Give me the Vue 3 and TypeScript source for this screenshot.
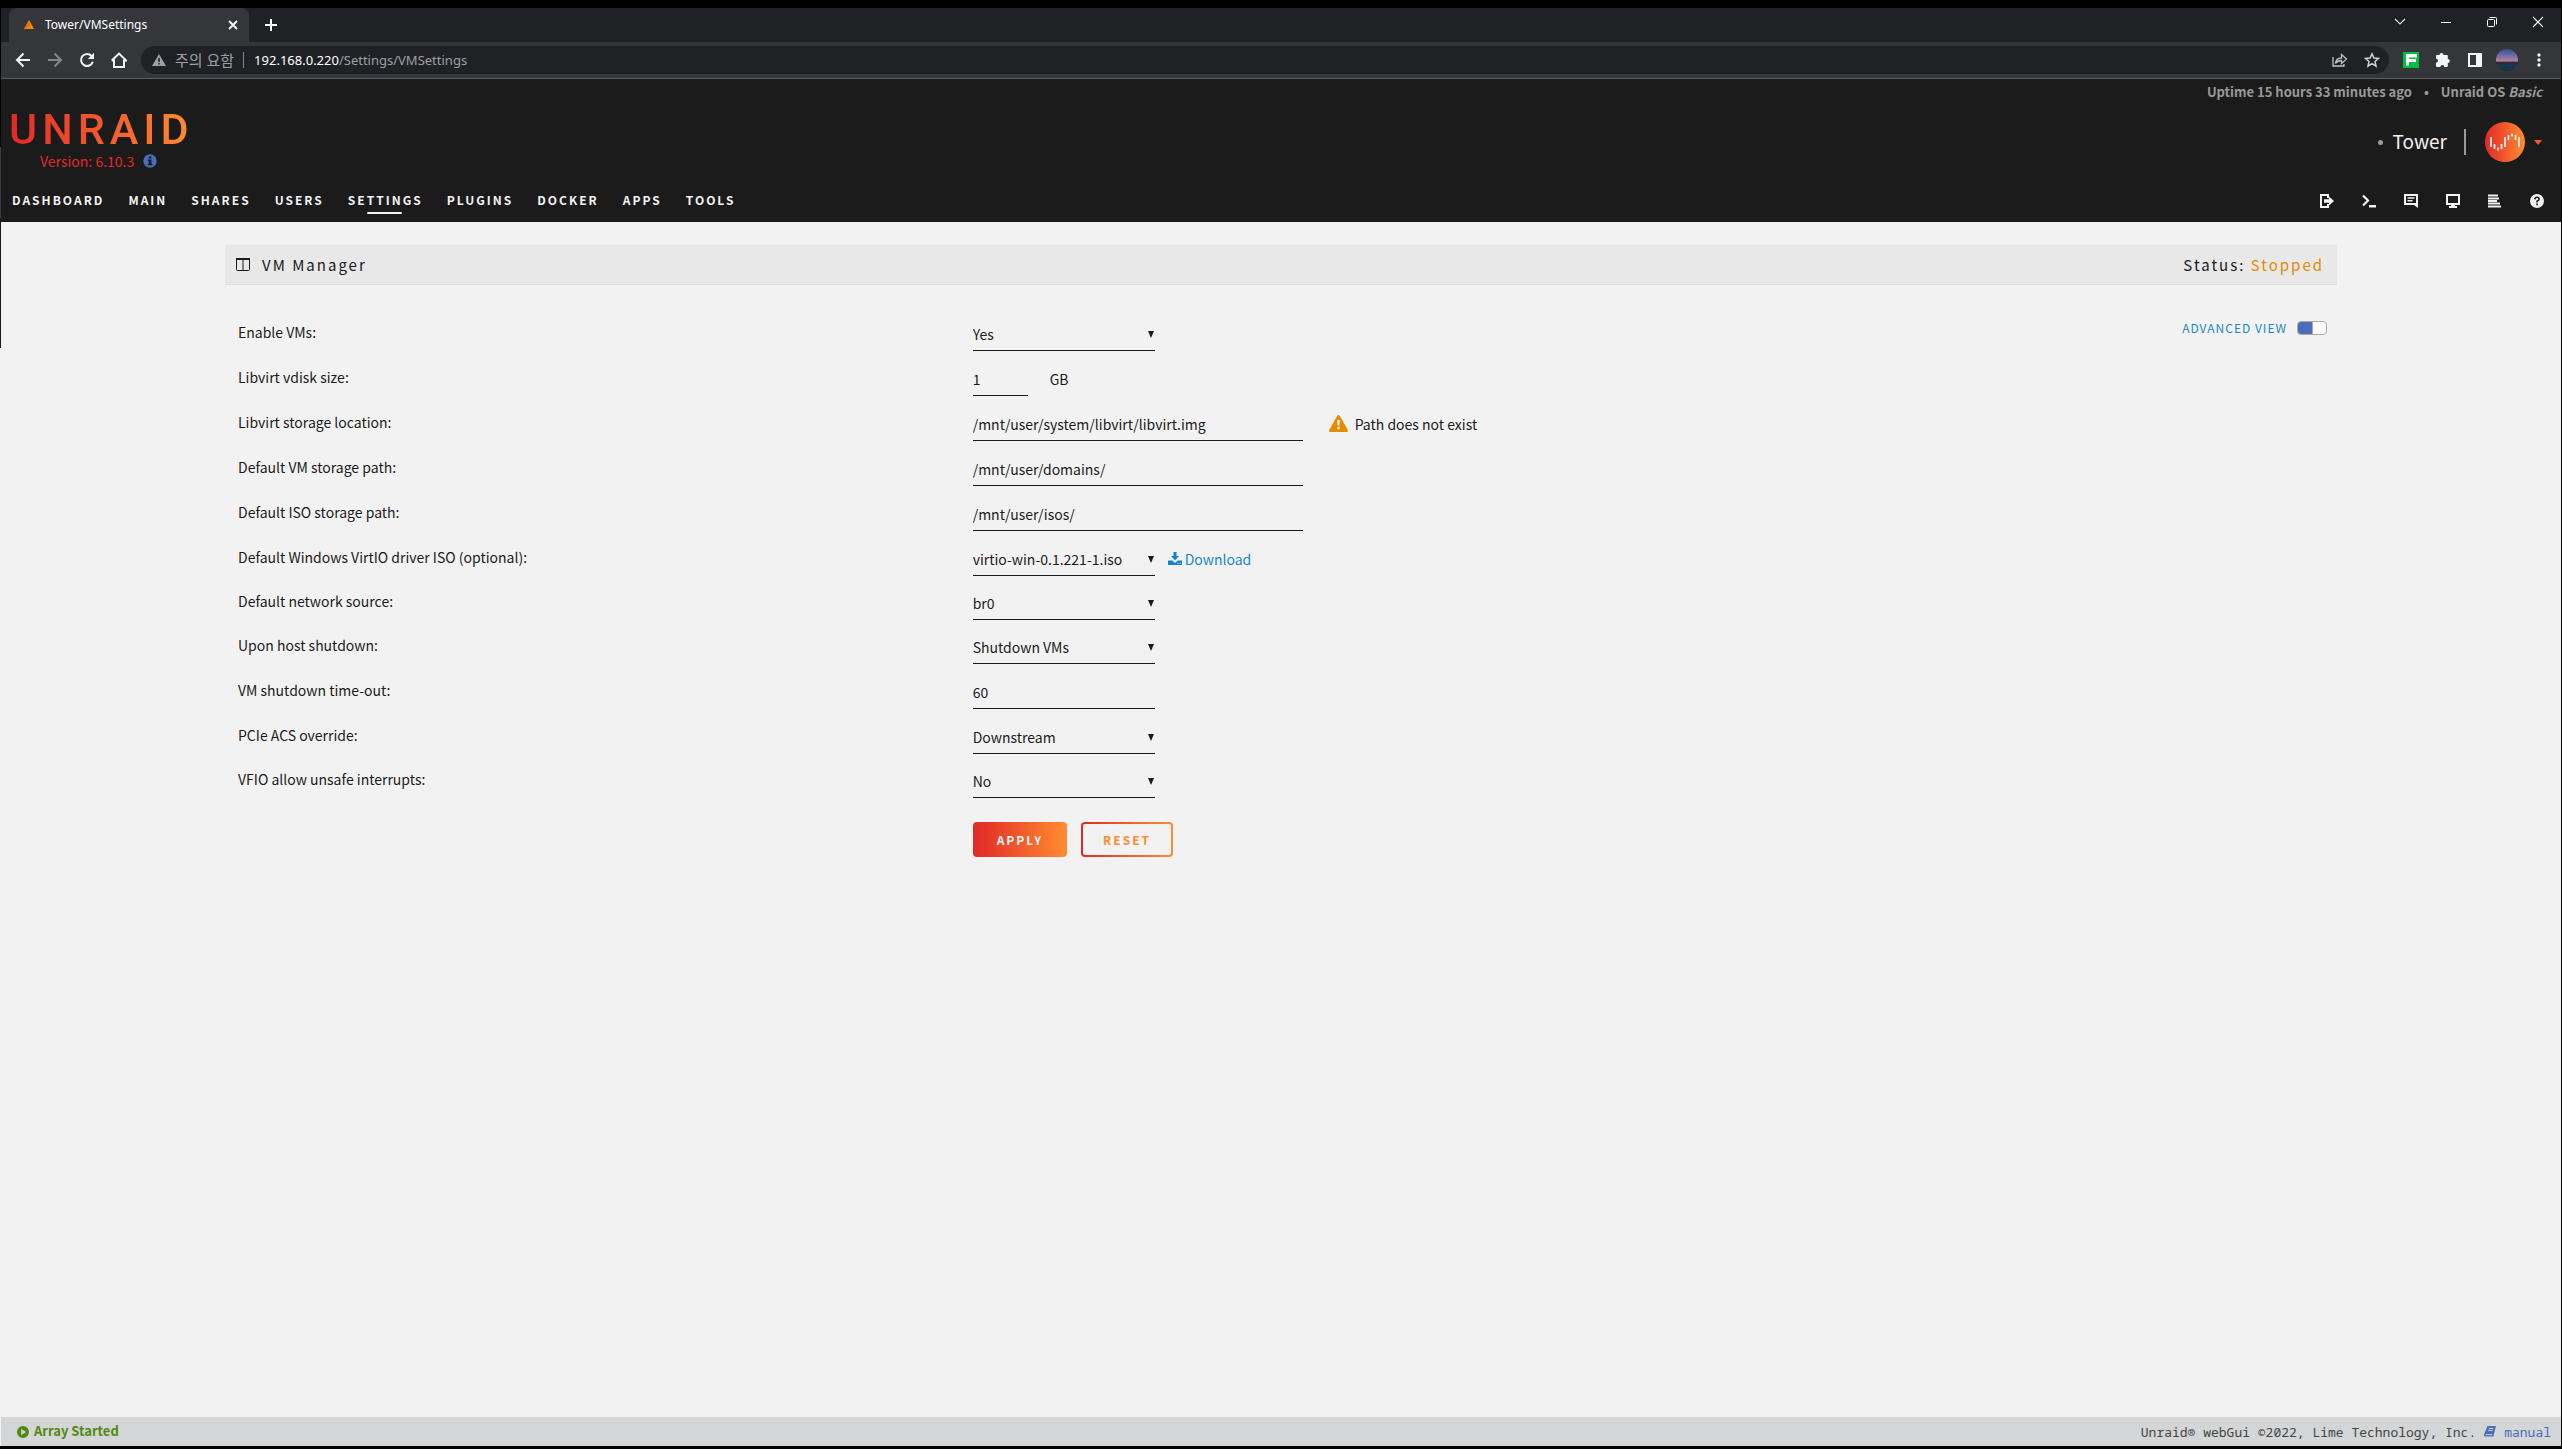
<script setup lang="ts">
import { ref } from 'vue'

interface Field {
  id: string
  label: string
  kind: 'select' | 'text'
  value: string
  size?: 'small' | 'wide'
  compact?: boolean
}

const tabs = ['Dashboard', 'Main', 'Shares', 'Users', 'Settings', 'Plugins', 'Docker', 'Apps', 'Tools']
const activeTab = 'Settings'
const advanced = ref(true)

const fields = ref<Field[]>([
  { id: 'service', label: 'Enable VMs:', kind: 'select', value: 'Yes' },
  { id: 'image-size', label: 'Libvirt vdisk size:', kind: 'text', value: '1', size: 'small' },
  { id: 'image-file', label: 'Libvirt storage location:', kind: 'text', value: '/mnt/user/system/libvirt/libvirt.img', size: 'wide' },
  { id: 'domain-dir', label: 'Default VM storage path:', kind: 'text', value: '/mnt/user/domains/', size: 'wide' },
  { id: 'media-dir', label: 'Default ISO storage path:', kind: 'text', value: '/mnt/user/isos/', size: 'wide' },
  { id: 'virtio', label: 'Default Windows VirtIO driver ISO (optional):', kind: 'select', value: 'virtio-win-0.1.221-1.iso' },
  { id: 'network', label: 'Default network source:', kind: 'select', value: 'br0', compact: true },
  { id: 'host-shutdown', label: 'Upon host shutdown:', kind: 'select', value: 'Shutdown VMs', compact: true },
  { id: 'timeout', label: 'VM shutdown time-out:', kind: 'text', value: '60' },
  { id: 'pcie', label: 'PCIe ACS override:', kind: 'select', value: 'Downstream' },
  { id: 'vfio', label: 'VFIO allow unsafe interrupts:', kind: 'select', value: 'No', compact: true },
])
</script>

<template>
  <div class="screen">
    <div class="tabstrip">
      <div class="tab">
        <svg class="favicon" width="10" height="10" viewBox="0 0 10 10"><path d="M5 0 10 9H0z" fill="#ff8c00" /><path d="M5 0 6 6 0 9z" fill="#e86a10" /></svg>
        <span class="tab-title">Tower/VMSettings</span>
        <button class="plain" aria-label="Close tab">
          <svg width="10" height="10" viewBox="0 0 10 10"><path d="M1 1l8 8M9 1l-8 8" stroke="#f1f3f4" stroke-width="2" /></svg>
        </button>
      </div>
      <button class="plain new-tab" aria-label="New tab">
        <svg width="12" height="12" viewBox="0 0 12 12"><path d="M6 0v12M0 6h12" stroke="#fff" stroke-width="2" /></svg>
      </button>
      <div class="window-controls">
        <button class="plain" aria-label="Search tabs"><svg width="12" height="12" viewBox="0 0 12 12"><path d="M1 3l5 5 5-5" fill="none" stroke="#e8eaed" stroke-width="1.1" /></svg></button>
        <button class="plain" aria-label="Minimize"><svg width="12" height="12" viewBox="0 0 12 12"><path d="M1 6.5h10" stroke="#fff" /></svg></button>
        <button class="plain" aria-label="Restore"><svg width="12" height="12" viewBox="0 0 12 12"><rect x="1.500" y="3.500" width="7" height="7" rx="1" fill="none" stroke="#fff" /><path d="M3.500 1.500h6q1 0 1 1v6" fill="none" stroke="#fff" /></svg></button>
        <button class="plain" aria-label="Close"><svg width="12" height="12" viewBox="0 0 12 12"><path d="M1 1l10 10M11 1 1 11" stroke="#fff" stroke-width="1.200" /></svg></button>
      </div>
    </div>

    <div class="toolbar">
      <div class="nav-buttons">
        <button class="plain" aria-label="Back"><svg width="16" height="16" viewBox="0 0 16 16"><path d="M15 8H2M8.500 1.500 2 8l6.500 6.500" fill="none" stroke="#f1f3f4" stroke-width="2" /></svg></button>
        <button class="plain" aria-label="Forward"><svg width="16" height="16" viewBox="0 0 16 16"><path d="M1 8h13M7.500 1.500 14 8l-6.500 6.500" fill="none" stroke="#85868a" stroke-width="2" /></svg></button>
        <button class="plain" aria-label="Reload"><svg width="16" height="16" viewBox="0 0 16 16"><path d="M13.800 9.800A6 6 0 1 1 12.600 4" fill="none" stroke="#f1f3f4" stroke-width="2" /><path d="M15 .8V7H8.800z" fill="#f1f3f4" /></svg></button>
        <button class="plain" aria-label="Home"><svg width="16" height="16" viewBox="0 0 16 16"><path d="M3 7.500V15h10V7.500M.8 8.500 8 1.600l7.200 6.900h-2.400M.8 8.500H3" fill="none" stroke="#f1f3f4" stroke-width="2" /></svg></button>
      </div>
      <div class="omnibox">
        <svg width="14" height="12" viewBox="0 0 14 12"><path fill-rule="evenodd" d="M7 0 14 12H0zM6.200 4v4h1.600V4zM6.200 9v1.500h1.600V9z" fill="#9aa0a6" /></svg>
        <span class="insecure">주의 요함</span>
        <span class="divider"></span>
        <span class="url"><b>192.168.0.220</b>/Settings/VMSettings</span>
        <span class="omni-actions">
          <button class="plain" aria-label="Share"><svg width="16" height="14" viewBox="0 0 16 14"><path d="M1 4v9h11v-2M3.500 10.500Q4 5 9.500 5V1.500L14.500 6l-5 4.500V7.500Q5.500 7.500 3.500 10.500z" fill="none" stroke="#bdc1c6" stroke-width="1.300" /></svg></button>
          <button class="plain" aria-label="Bookmark"><svg width="16" height="16" viewBox="0 0 16 16"><path d="M8 1.800 9.900 6l4.600.4L11 9.500l1 4.600-4-2.500-4 2.500 1-4.600L1.500 6.400 6.100 6z" fill="none" stroke="#d0d3d6" stroke-width="1.500" /></svg></button>
        </span>
      </div>
      <div class="extensions">
        <button class="plain" aria-label="Extension"><svg width="16" height="16" viewBox="0 0 16 16"><path fill="#00bf3c" d="M0 0h16v16H0z" /><path fill="#fff" d="M3 2h11v3.500H6V7h7v3H6v3.500H3z" /></svg></button>
        <button class="plain" aria-label="Extensions"><svg width="16" height="16" viewBox="0 0 16 16"><path fill="#f1f3f4" d="M6.500 1a2 2 0 0 1 2 2h3.300q1 0 1 1v3a2 2 0 0 1 0 4v3q0 1-1 1H9.300a2 2 0 0 0-4 0H2q-1 0-1-1v-3.300a2 2 0 0 0 0-4V4q0-1 1-1h2.500a2 2 0 0 1 2-2z" /></svg></button>
        <button class="plain" aria-label="Side panel"><svg width="16" height="16" viewBox="0 0 16 16"><path fill="#f1f3f4" fill-rule="evenodd" d="M1 1h14v14H1zM3 3v10h6V3z" /></svg></button>
        <span class="profile"></span>
        <button class="plain" aria-label="Menu"><svg width="16" height="16" viewBox="0 0 16 16"><g fill="#f1f3f4"><circle cx="8" cy="3" r="1.700" /><circle cx="8" cy="8" r="1.700" /><circle cx="8" cy="13" r="1.700" /></g></svg></button>
      </div>
    </div>

    <header class="header">
      <div class="brand">
        <a href="#" class="logo">UNRAID</a>
        <div class="version">
          <span>Version: 6.10.3</span>
          <svg width="14" height="14" viewBox="0 0 14 14"><circle cx="7" cy="7" r="6.700" fill="#486dba" /><path d="M5.800 2.500h2.600v2H5.800zM4.800 5.500h3.600v4.200h1v1.600H4.800V9.700h1V7.100h-1z" fill="#1c1b1b" /></svg>
        </div>
      </div>
      <div class="server">
        <div class="uptime"><span>Uptime 15 hours 33 minutes ago</span><span>•</span><span>Unraid OS <i>Basic</i></span></div>
        <div class="identity">
          <span class="dot"></span>
          <span class="name">Tower</span>
          <span class="bar"></span>
          <button class="plain account" aria-label="Account">
            <svg width="40" height="40" viewBox="0 0 40 40">
              <defs><linearGradient id="acct"><stop offset="0" stop-color="#e22828" /><stop offset="1" stop-color="#ff8c2f" /></linearGradient></defs>
              <circle cx="20" cy="20" r="20" fill="url(#acct)" />
              <path d="M6 15v10M9.500 22v5M13 25.500v3M16.500 22v5M20 15v10M23.500 13v5M27 11.500v3M30.500 13v5M34 15v10" stroke="#fff" stroke-width="1.600" />
            </svg>
            <svg width="8" height="5" viewBox="0 0 8 5"><path d="M0 0h8L4 5z" fill="#f15a2c" /></svg>
          </button>
        </div>
      </div>
      <nav class="menu">
        <a v-for="t in tabs" :key="t" href="#" :class="{ active: t === activeTab }">{{ t }}</a>
        <span class="tools">
          <button class="plain" aria-label="Logout"><svg width="14" height="14" viewBox="0 0 14 14"><path d="M8 4V1H1v12h7v-3" fill="none" stroke="#f2f2f2" stroke-width="2" /><path d="M4 5.200H9V2.500L14 7l-5 4.500V8.800H4z" fill="#f2f2f2" /></svg></button>
          <button class="plain" aria-label="Terminal"><svg width="14" height="14" viewBox="0 0 14 14"><path d="M1 1.500 6 6.500l-5 5" fill="none" stroke="#f2f2f2" stroke-width="2.200" /><path d="M7 11h7v2.500H7z" fill="#f2f2f2" /></svg></button>
          <button class="plain" aria-label="Feedback"><svg width="14" height="14" viewBox="0 0 14 14"><path fill="#f2f2f2" fill-rule="evenodd" d="M0 0h14v14l-4-3H0zM2 2v7h10V2z" /><path d="M3.500 4h7M3.500 6.700h5" stroke="#f2f2f2" stroke-width="1.500" /></svg></button>
          <button class="plain" aria-label="Info"><svg width="14" height="14" viewBox="0 0 14 14"><path fill="#f2f2f2" fill-rule="evenodd" d="M0 0h14v11H9v1h2v2H3v-2h2v-1H0zM2 2v7h10V2z" /></svg></button>
          <button class="plain" aria-label="Log"><svg width="14" height="14" viewBox="0 0 14 14"><path d="M0 1.500h10M0 4.500h11M0 7h9M0 9.500h12M0 12.500h13" stroke="#f2f2f2" stroke-width="2" /></svg></button>
          <button class="plain" aria-label="Help"><svg width="14" height="14" viewBox="0 0 14 14"><circle cx="7" cy="7" r="7" fill="#f2f2f2" /><path d="M4.800 5.300Q5 3.300 7 3.300t2.100 1.800Q9.100 6.300 7 7.300v1.200" fill="none" stroke="#1c1b1b" stroke-width="1.600" /><path d="M6.200 9.500h1.700v1.700H6.200z" fill="#1c1b1b" /></svg></button>
        </span>
      </nav>
    </header>

    <main class="content">
      <div class="title">
        <svg width="14" height="13" viewBox="0 0 14 13"><rect x=".5" y=".5" width="13" height="12" rx="1" fill="none" stroke="#1c1b1b" /><path d="M0 1h14" stroke="#1c1b1b" stroke-width="2" /><path d="M7 2v10.500" stroke="#1c1b1b" /></svg>
        <h1>VM Manager</h1>
        <span class="status">Status: <em>Stopped</em></span>
      </div>

      <form class="form" @submit.prevent>
        <div v-for="f in fields" :key="f.id" class="row" :class="{ compact: f.compact }">
          <label class="caption" :for="f.id">{{ f.label }}</label>
          <div class="control">
            <select v-if="f.kind === 'select'" :id="f.id" v-model="f.value" class="field"><option>{{ f.value }}</option></select>
            <input v-else :id="f.id" v-model="f.value" type="text" class="field" :class="f.size">
            <span v-if="f.id === 'image-size'" class="note unit">GB</span>
            <span v-if="f.id === 'image-file'" class="note warning">
              <svg width="19" height="17" viewBox="0 0 19 17"><path fill="#e68a00" fill-rule="evenodd" d="M9.500 0q.8 0 1.200.7L18.800 15q.4 1.800-1.200 2H1.400Q-.2 16.800.2 15L8.300.7Q8.700 0 9.500 0zM8.200 5l.4 5.500h1.800l.4-5.500zM8.300 11.800v2.400h2.400v-2.400z" /></svg>
              Path does not exist
            </span>
            <a v-if="f.id === 'virtio'" href="#" class="note download">
              <svg width="14" height="13" viewBox="0 0 14 13"><path fill="#0d84cf" d="M5.500 0h3v4H11L7 8.300 3 4h2.500zM0 8.500h4.200L7 11l2.800-2.500H14V13H0z" /><path d="M9.500 11.300h1M11.700 11.300h1" stroke="#f2f2f2" /></svg>
              Download
            </a>
            <label v-if="f.id === 'service'" class="switch">
              Advanced View
              <input v-model="advanced" type="checkbox">
            </label>
          </div>
        </div>
        <div class="row buttons">
          <span></span>
          <div class="control">
            <button class="apply" type="submit">Apply</button>
            <button class="reset" type="button">Reset</button>
          </div>
        </div>
      </form>
    </main>

    <footer class="footer">
      <svg width="12" height="12" viewBox="0 0 12 12"><path fill="#4f8a10" fill-rule="evenodd" d="M6 0a6 6 0 1 1 0 12A6 6 0 0 1 6 0zM4.200 3v6l5-3z" /></svg>
      <strong>Array Started</strong>
      <span class="copyright">Unraid® webGui ©2022, Lime Technology, Inc.</span>
      <a href="#" class="manual">
        <svg width="12" height="11" viewBox="0 0 12 11"><path d="M3.500 0H12L9.300 10.500H1Q-.5 10 .2 8z" fill="#486dba" /><path d="M4.800 2.500h4.500M4.200 4.500h4.500M1.800 8.700h6.400" stroke="#d4d5d6" /></svg>
        manual
      </a>
    </footer>
  </div>
</template>

<style>
body {
  margin: 0;
  background: #000;
}
</style>

<style scoped>
.screen {
  box-sizing: border-box;
  min-height: 100vh;
  padding: 8px 1px 3px;
  display: flex;
  flex-direction: column;
  background: linear-gradient(#000 147px, #3c4043 147px 218px, #1c1b1b 218px 348px, #f2f2f2 348px calc(100% - 3px), #000 0) 0 0 / 1px 100% no-repeat #000;
  color: #1c1b1b;
  font: 14px/20px "Noto Sans CJK KR", "Noto Sans", sans-serif;
}
svg {
  display: block;
  flex: none;
}
a {
  text-decoration: none;
}
.plain {
  padding: 0;
  border: 0;
  background: none;
  display: flex;
  align-items: center;
  justify-content: center;
}

/* Browser chrome */
.tabstrip {
  height: 34px;
  display: flex;
  background: #202124;
}
.tab {
  box-sizing: border-box;
  width: 240px;
  margin-left: 8px;
  padding: 0 11px 0 15px;
  display: flex;
  align-items: center;
  border-radius: 8px 8px 0 0;
  background: #35363a;
  color: #fff;
  font: 12px/16px "Noto Sans", sans-serif;
}
.tab-title {
  margin: 0 auto 0 11px;
}
.new-tab {
  width: 44px;
}
.window-controls {
  height: 28px;
  margin-left: auto;
  display: flex;
}
.window-controls button {
  width: 46px;
}
.toolbar {
  height: 36px;
  display: flex;
  align-items: center;
  background: #35363a;
  border-bottom: 1px solid #5b5c5f;
}
.nav-buttons {
  display: flex;
  gap: 16px;
  padding: 0 14px;
}
.omnibox {
  flex: 1;
  height: 28px;
  padding: 0 9px 0 11px;
  display: flex;
  align-items: center;
  border-radius: 14px;
  background: #202124;
  color: #9aa0a6;
  font: 13px/20px "Noto Sans", "Noto Sans CJK KR", sans-serif;
}
.insecure {
  margin-left: 9px;
  font-size: 15px;
}
.divider {
  width: 1px;
  height: 16px;
  margin: 0 10px 0 9px;
  background: #80868b;
}
.url b {
  color: #fff;
  font-weight: 400;
}
.omni-actions {
  margin-left: auto;
  display: flex;
  gap: 16px;
}
.extensions {
  display: flex;
  align-items: center;
  gap: 16px;
  padding: 0 14px;
}
.profile {
  width: 22px;
  height: 22px;
  margin: 0 -3px;
  border-radius: 50%;
  background: linear-gradient(#2c5590, #7d70a8 35%, #b8809b 55%, #3a2530 60%, #173a50 75%, #123048);
}

/* Page header */
.header {
  height: 143px;
  box-sizing: border-box;
  padding: 0 17px 0 11px;
  display: grid;
  grid-template-columns: auto 1fr;
  grid-template-rows: 101px 42px;
  background: #1c1b1b;
}
.brand {
  padding-top: 30px;
}
.logo {
  display: block;
  margin-left: -3px;
  background: linear-gradient(90deg, #e22828, #ff8c2f);
  background-clip: text;
  color: transparent;
  font: 500 43px/40px Roboto, sans-serif;
  letter-spacing: 5px;
}
.version {
  margin: 2px 0 0 28px;
  display: flex;
  align-items: center;
  gap: 9px;
  color: #e22828;
}
.server {
  padding-right: 2px;
  display: flex;
  flex-direction: column;
  align-items: flex-end;
}
.uptime {
  margin-top: 3px;
  display: flex;
  gap: 12px;
  color: #999;
  font-size: 13px;
  font-weight: 700;
}
.identity {
  margin-top: 20px;
  display: flex;
  align-items: center;
  color: #f2f2f2;
  font-size: 19px;
}
.dot {
  width: 5px;
  height: 5px;
  margin-right: 10px;
  border-radius: 50%;
  background: #999;
}
.name {
  padding-bottom: 3px;
}
.bar {
  width: 2px;
  height: 26px;
  margin: 0 19px 0 17px;
  background: #999;
}
.account {
  gap: 9px;
}
.menu {
  grid-column: 1 / -1;
  display: flex;
  gap: 24px;
  font-size: 12px;
  font-weight: 700;
  letter-spacing: 2px;
}
.menu a {
  position: relative;
  padding-top: 10px;
  color: #f2f2f2;
  text-transform: uppercase;
}
.menu .active::after {
  content: "";
  position: absolute;
  left: calc(50% - 18px);
  bottom: 8px;
  width: 35px;
  height: 2px;
  border-radius: 1px;
  background: #f2f2f2;
}
.tools {
  margin: 14px 0 0 auto;
  display: flex;
  align-items: flex-start;
  gap: 28px;
}

/* Settings form */
.content {
  flex: 1;
  padding: 23px calc((100% - 82.5%) / 2) 0;
  background: #f2f2f2;
}
.title {
  box-sizing: border-box;
  height: 40px;
  padding: 0 13px 0 11px;
  display: flex;
  align-items: center;
  gap: 12px;
  background: #e8e8e8;
  border-bottom: 1px solid #dedede;
  font-size: 15px;
  letter-spacing: 2px;
}
h1 {
  margin: 0;
  font: inherit;
}
.status {
  margin-left: auto;
}
.status em {
  color: #e68a00;
  font-style: normal;
}
.form {
  padding: 21px 0 0 13px;
}
.row {
  height: 45px;
  display: grid;
  grid-template-columns: 35% 1fr;
  align-items: end;
}
.row.compact {
  height: 44px;
}
.caption {
  line-height: 38px;
}
.control {
  display: flex;
  align-items: center;
}
.field {
  box-sizing: border-box;
  width: 182px;
  height: 33px;
  padding: 0 0 1px;
  border: 0;
  border-bottom: 1px solid #1c1b1b;
  border-radius: 0;
  appearance: none;
  background: none;
  color: inherit;
  font: inherit;
}
select.field {
  background: url("data:image/svg+xml,%3Csvg xmlns='http://www.w3.org/2000/svg' width='6' height='7'%3E%3Cpath d='M0 0h6L3 7z' fill='%231c1b1b'/%3E%3C/svg%3E") right 1px center no-repeat;
}
.field.small {
  width: 55px;
}
.field.wide {
  width: 330px;
}
.note {
  padding-bottom: 2px;
}
.unit {
  margin-left: 22px;
}
.warning {
  margin-left: 26px;
  display: flex;
  align-items: center;
  gap: 7px;
}
.download {
  margin-left: 13px;
  display: flex;
  align-items: center;
  gap: 3px;
  color: #1d86c8;
}
.switch {
  margin: 0 10px 0 auto;
  display: flex;
  align-items: center;
  align-self: flex-start;
  gap: 10px;
  color: #1d86c8;
  font-size: 12px;
  letter-spacing: 1px;
  text-transform: uppercase;
}
.switch input {
  box-sizing: border-box;
  width: 30px;
  height: 14px;
  margin: 0;
  border: 1px solid #aaa;
  border-radius: 4px;
  appearance: none;
  background: #fafafa;
}
.switch input:checked {
  background: linear-gradient(90deg, #486dba 14px, #aaa 14px 15px, #fafafa 15px);
}
.row.buttons {
  height: 59px;
}
.buttons .control {
  gap: 14px;
}
.apply,
.reset {
  box-sizing: border-box;
  height: 35px;
  padding: 0 22px;
  border: 2px solid transparent;
  border-radius: 4px;
  background: linear-gradient(90deg, #e22828, #ff8c2f) border-box;
  color: #f2f2f2;
  font: 700 12px/20px "Noto Sans CJK KR", sans-serif;
  letter-spacing: 2px;
  text-transform: uppercase;
}
.reset {
  padding: 0 20px;
  background: linear-gradient(#f2f2f2, #f2f2f2) padding-box, linear-gradient(90deg, #e22828, #ff8c2f) border-box;
  color: #ff8c2f;
}

/* Status bar */
.footer {
  height: 29px;
  padding: 0 10px 0 16px;
  display: flex;
  align-items: center;
  background: #d4d5d6;
  font: 13px/20px "Noto Sans Mono", monospace;
}
.footer strong {
  margin-left: 5px;
  padding-bottom: 1px;
  color: #4f8a10;
  font: 700 13px/20px "Noto Sans CJK KR", sans-serif;
}
.copyright {
  margin-left: auto;
  color: #444;
}
.manual {
  margin-left: 8px;
  display: flex;
  align-items: center;
  gap: 8px;
  color: #486dba;
}
</style>
